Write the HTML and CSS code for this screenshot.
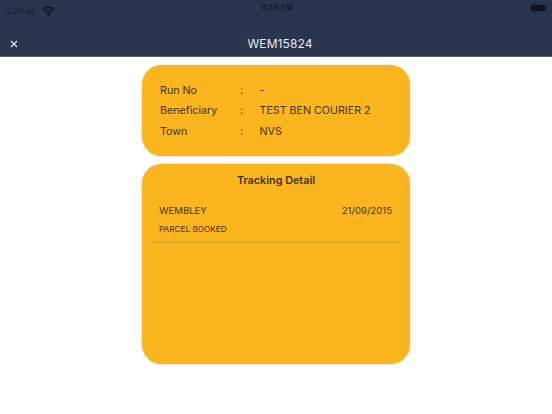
FILE: index.html
```html
<!DOCTYPE html>
<html lang="en">
<head>
<meta charset="utf-8">
<title>WEM15824</title>
<link rel="stylesheet" href="styles.css">
</head>
<body>
<header class="header">
  <div class="status">
    <div class="status-left">
      <span>Carrier</span>
      <svg class="wifi" viewBox="0 0 14 10" width="13" height="9"><path d="M7 10 L4.6 7.3 A3.6 3.6 0 0 1 9.4 7.3 Z M3.5 6.1 L2.2 4.7 A7 7 0 0 1 11.8 4.7 L10.5 6.1 A5.2 5.2 0 0 0 3.5 6.1 Z M1.2 3.6 L0 2.3 A10 10 0 0 1 14 2.3 L12.8 3.6 A8.3 8.3 0 0 0 1.2 3.6 Z" fill="#0d1322"/></svg>
    </div>
    <span class="time">4:56 PM</span>
    <svg class="battery" viewBox="0 0 17 8" width="16" height="8"><rect x="0" y="0.5" width="15" height="7" rx="1.6" fill="#0d1322"/><rect x="15.5" y="2.8" width="1.2" height="2.4" rx="0.5" fill="#0d1322"/></svg>
  </div>
  <div class="nav">
    <svg class="close" viewBox="0 0 8 8" width="8" height="8"><path d="M1 1 L7 7 M7 1 L1 7" stroke="#e8ebf0" stroke-width="1.1" fill="none"/></svg>
    <span class="title">WEM15824</span>
  </div>
</header>
<main class="content">
  <section class="card info">
    <div class="row"><span class="label">Run No</span><span class="colon">:</span><span>-</span></div>
    <div class="row"><span class="label">Beneficiary</span><span class="colon">:</span><span>TEST BEN COURIER 2</span></div>
    <div class="row"><span class="label">Town</span><span class="colon">:</span><span>NVS</span></div>
  </section>
  <section class="card tracking">
    <h2 class="heading">Tracking Detail</h2>
    <div class="entry">
      <div class="entry-top"><span>WEMBLEY</span><span>21/09/2015</span></div>
      <div class="entry-status">PARCEL BOOKED</div>
    </div>
  </section>
</main>
</body>
</html>
```
FILE: styles.css
```css
* { box-sizing: border-box; }
html, body { margin: 0; padding: 0; }
body {
  width: 552px;
  height: 414px;
  overflow: hidden;
  background: #fff;
  font-family: Inter, "Liberation Sans", sans-serif;
  color: #3f3319;
}
.header {
  height: 57px;
  background: #29354d;
  border-bottom: 1px solid #59606e;
  display: flex;
  flex-direction: column;
}
.status {
  height: 20px;
  padding: 0 5px 0 7px;
  display: grid;
  grid-template-columns: 1fr auto 1fr;
  align-items: start;
  color: #0d1322;
}
.status-left { display: flex; align-items: center; gap: 7px; padding-top: 6px; font-size: 8.5px; line-height: 11px; color: #141b2c; }
.time { font-size: 8px; line-height: 10px; padding-top: 2px; }
.battery { justify-self: end; margin-top: 4px; }
.nav {
  flex: 1;
  position: relative;
  display: flex;
  align-items: center;
  justify-content: center;
  padding-left: 8px;
}
.close { position: absolute; left: 10px; top: 20px; }
.title { font-size: 12px; color: #e8ebf0; padding-top: 10px; letter-spacing: 0.1px; }
.content {
  display: flex;
  flex-direction: column;
  align-items: center;
  gap: 8px;
  padding-top: 8px;
}
.card {
  width: 268px;
  background: #fbb51f;
  border-radius: 20px;
  box-shadow: 0 0 2px rgba(110, 90, 40, 0.4);
}
.info {
  height: 90.5px;
  padding: 15.6px 18px 0 18px;
  font-size: 10.7px;
  line-height: 20.67px;
}
.row { display: flex; }
.label { width: 80px; }
.colon { width: 19.5px; }
.tracking {
  height: 200px;
  padding: 9px 10px 0;
}
.heading {
  margin: 0;
  font-size: 10.8px;
  line-height: 16px;
  font-weight: 600;
  text-align: center;
}
.entry {
  margin-top: 15px;
  height: 39.5px;
  border-bottom: 1px solid #d99c1e;
  padding: 0 8px 0 7px;
}
.entry-top {
  display: flex;
  justify-content: space-between;
  font-size: 9.6px;
  line-height: 14px;
}
.entry-status {
  margin-top: 5px;
  font-size: 8.2px;
  line-height: 12px;
}
```
